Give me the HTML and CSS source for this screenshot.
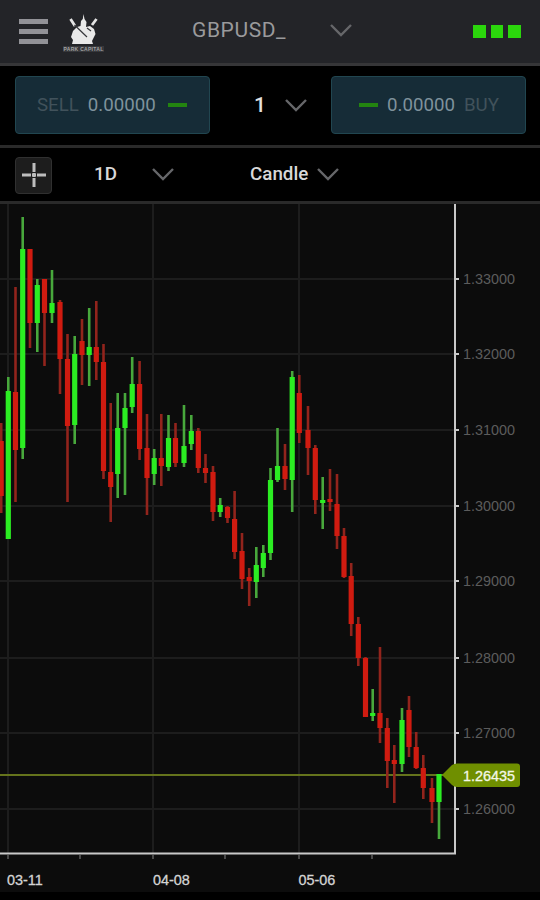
FILE: index.html
```
<!DOCTYPE html>
<html lang="en">
<head>
<meta charset="utf-8">
<title>GBPUSD_</title>
<link rel="stylesheet" href="styles.css">
</head>
<body>
<div class="app">
  <header class="topbar">
    <button class="menu" aria-label="Menu"><span></span><span></span><span></span></button>
    <div class="brand">
      <svg class="crest" width="32" height="31" viewBox="0 0 32 31" aria-hidden="true">
        <path fill="#e9e9e9" d="M15.5 0 16.5 5 18.5 8 18 13 22 12 26 15 27.5 20 25 25 24 27 25 30H4L5 26 3 23 5 17 9 13 12.5 12 13 7 14.8 5Z"/>
        <path stroke="#e4e4e4" stroke-width="2.8" fill="none" d="M2.5 5 7 12M28.5 5 24 11"/>
        <path stroke="#36373b" stroke-width="1.2" fill="none" d="M6.5 11 19 23M19 14 23 17"/>
      </svg>
      <span class="brand-name">PARK CAPITAL</span>
    </div>
    <div class="symbol">GBPUSD_</div>
    <svg class="chevron" width="22" height="13" viewBox="0 0 22 13"><path d="M1 1 11 11 21 1"/></svg>
    <div class="signal"><i></i><i></i><i></i></div>
  </header>
  <section class="trade">
    <button class="quote"><span class="side">SELL</span><span class="price">0.00000</span><i class="dash"></i></button>
    <div class="amount"><span>1</span><svg class="chevron" width="22" height="13" viewBox="0 0 22 13"><path d="M1 1 11 11 21 1"/></svg></div>
    <button class="quote buy"><i class="dash"></i><span class="price">0.00000</span><span class="side">BUY</span></button>
  </section>
  <nav class="tools">
    <button class="cross" aria-label="Crosshair"><svg width="24" height="24" viewBox="0 0 24 24"><path d="M12 0V9M12 15V24M0 12H9M15 12H24M10 12H14M12 10V14"/></svg></button>
    <span class="period">1D</span>
    <svg class="chevron" width="22" height="13" viewBox="0 0 22 13"><path d="M1 1 11 11 21 1"/></svg>
    <span class="style">Candle</span>
    <svg class="chevron" width="22" height="13" viewBox="0 0 22 13"><path d="M1 1 11 11 21 1"/></svg>
  </nav>
  <main class="chart">
    <svg id="plot" width="540" height="688" viewBox="0 204 540 688"></svg>
  </main>
</div>
<script src="chart.js"></script>
</body>
</html>
```
FILE: styles.css
```
* { box-sizing: border-box; }
body { margin: 0; background: #000; font-family: Roboto, sans-serif; }
button { padding: 0; border: 0; background: none; font: inherit; }
.app { width: 540px; height: 900px; overflow: hidden; display: flex; flex-direction: column; }
.chevron { fill: none; stroke: #66676a; stroke-width: 2.4; }

.topbar { height: 66px; flex: none; background: #232428; border-bottom: 3px solid #363638; display: grid; grid-template-columns: 29px 144px 138px 22px 121px 48px; align-items: start; padding-left: 19px; }
.menu { display: flex; flex-direction: column; gap: 5px; padding-top: 19px; }
.menu span { height: 5px; width: 29px; background: #929297; }
.brand { margin-left: 15px; padding-top: 14px; display: flex; flex-direction: column; align-items: center; width: 41px; }
.brand-name { font: bold 5px/6px "Liberation Sans", sans-serif; color: #a4a4a4; white-space: nowrap; background: #37383c; margin-top: 1px; letter-spacing: .3px; }
.symbol { font-size: 21px; line-height: 25px; padding-top: 18px; color: #9a9a9c; letter-spacing: .6px; }
.topbar .chevron { margin-top: 24px; }
.signal { grid-column: 6; display: flex; gap: 5px; padding-top: 25px; }
.signal i { width: 12.5px; height: 13px; background: #2bd60c; }

.trade { height: 82px; flex: none; border-bottom: 3px solid #2a2a2a; display: grid; grid-template-columns: 195px 121px 195px; padding: 10px 14px 0 15px; align-items: start; }
.quote { height: 58px; background: #162c37; border: 1px solid #214650; border-radius: 4px; display: flex; align-items: center; padding-left: 21px; font-size: 18.7px; }
.quote.buy { padding-left: 27px; }
.side { color: #41525b; }
.price { color: #7f929c; margin-left: 9px; }
.dash { width: 19px; height: 4px; background: #238410; margin-left: 12px; }
.buy .dash { margin-left: 0; }
.buy .price { margin-left: 9px; }
.buy .side { margin-left: 9px; }
.amount { height: 58px; display: flex; align-items: center; padding-left: 44px; gap: 19px; color: #e2e2e2; font-size: 21px; font-weight: 500; }

.tools { height: 56px; flex: none; border-bottom: 3px solid #2a2a2a; display: grid; grid-template-columns: 79px 58px 98px 67px 22px; padding-left: 15px; align-items: center; color: #d8d8d8; font-size: 18.8px; font-weight: 500; }
.period, .style { margin-top: -2px; }
.cross { width: 37px; height: 37px; margin-top: 1px; border: 1px solid #303030; border-radius: 4px; background: #1d1d1d; display: grid; place-items: center; }
.cross path { stroke: #bdbdbd; stroke-width: 3; }

.chart { height: 688px; background: #0c0c0c; }
.chart svg { display: block; }
.grid { stroke: #1d1d1d; stroke-width: 2; }
.axis { stroke: #c9c9c9; stroke-width: 2; fill: none; }
.minor { stroke: #484848; stroke-width: 2; }
.wick { stroke-width: 2.6; }
.body { stroke-width: 5.2; }
.wick.up { stroke: #48a83c; }
.wick.down { stroke: #92241c; }
.body.up { stroke: #2bed22; }
.body.down { stroke: #d01b10; }
.ylabel, .xlabel, .last { font: 14.4px "Liberation Sans", sans-serif; }
.ylabel { fill: #5c5c5c; }
.xlabel { fill: #d4d4d4; stroke: #d4d4d4; stroke-width: .3; }
.last { fill: #f4f7e6; stroke: #f4f7e6; stroke-width: .3; }
.lastline { stroke: #65741c; stroke-width: 2; }
.tag { fill: #6f8f00; }
```
FILE: chart.js
```
// Each candle: x, high, low, body top, body bottom, rising
const candles = [
  [1.2,423,513,441,496,0],[8.3,377,539,391,539,1],[15.5,287,502,392,450,0],[22.7,217,459,249,448,1],
  [30,249,348,249,323,0],[37.3,279,352,285,323,1],[44.5,279,366,279,313,0],[52,270,323,303,313,1],
  [60,300,394,302,359,0],[67.5,334,502,359,426,0],[74.7,336,444,354,425,1],[82,319,385,341,355,0],
  [89.2,308,386,347,355,1],[96.3,301,380,347,362,0],[103.5,344,479,362,471,0],[110.7,403,522,472,487,0],
  [117.7,393,498,428,474,1],[125,393,495,408,428,1],[132.2,357,413,384,407,1],[139.6,361,460,384,449,0],
  [147,414,515,448,478,0],[154.2,449,485,458,474,1],[161.3,414,486,458,466,0],[168.5,415,471,438,467,1],
  [175.5,423,467,438,463,0],[184,405,467,446,463,1],[191.3,415,450,431,444,1],[198.3,428,473,431,468,0],
  [205.5,454,483,468,473,0],[213,466,521,472,512,0],[220.2,498,517,505,512,1],[227.5,506,523,507,518,0],
  [234.6,491,559,519,552,0],[242,533,589,551,579,0],[249.2,568,606,577,581,0],[256.3,547,598,565,582,1],
  [263.3,545,577,553,568,1],[270.5,468,560,480,553,1],[277.5,428,482,466,480,1],[285,444,490,466,479,0],
  [292.2,371,512,377,480,1],[299.3,375,443,393,433,0],[308,406,475,430,448,0],[315.3,445,514,448,500,0],
  [322.7,477,529,500,503,1],[330,469,511,499,502,0],[337,474,549,504,536,0],[344,528,578,536,577,0],
  [351.2,563,636,576,624,0],[358.3,617,666,624,658,0],[365.5,657,717,658,717,0],[372.7,689,721,713,716,1],
  [380,647,743,713,728,0],[387.3,718,788,728,761,0],[394.3,745,803,760,764,0],[402,708,772,720,764,1],
  [409,696,757,710,747,0],[416.2,732,769,747,768,0],[423.3,755,799,768,788,0],[432,778,823,788,802,0],
  [439,774,839,774,802,1]
];
const line = (cls, x1, y1, x2, y2) => `<line class="${cls}" x1="${x1}" y1="${y1}" x2="${x2}" y2="${y2}"/>`;
const prices = [279, 354, 430, 506, 581, 658, 733, 809];
let out = '';
prices.forEach(y => out += line('grid', 0, y, 454, y));
[8, 153, 299].forEach(x => out += line('grid', x, 204, x, 853));
out += line('lastline', 0, 775, 446, 775);
candles.forEach(([x, h, l, t, b, up]) => {
  const dir = up ? 'up' : 'down';
  out += line('wick ' + dir, x, h, x, l) + line('body ' + dir, x, t, x, b);
});
out += '<path class="axis" d="M0 853.5H455V204"/>';
prices.forEach((y, i) => {
  out += line('axis', 455, y, 459, y);
  out += `<text class="ylabel" x="463" y="${y + 5}">${(1.33 - i * 0.01).toFixed(5)}</text>`;
});
[8, 80, 153, 225, 299, 372].forEach(x => out += line('minor', x, 855, x, 859));
[[7, '03-11'], [153, '04-08'], [298.5, '05-06']].forEach(([x, s]) => out += `<text class="xlabel" x="${x}" y="885">${s}</text>`);
out += '<path class="tag" d="M442 775 452 765Q454 763.5 457 763.5H517Q520 763.5 520 766.5V784Q520 787 517 787H457Q454 787 452 785Z"/>';
out += '<text class="last" x="463" y="781">1.26435</text>';
document.getElementById('plot').innerHTML = out;
```
